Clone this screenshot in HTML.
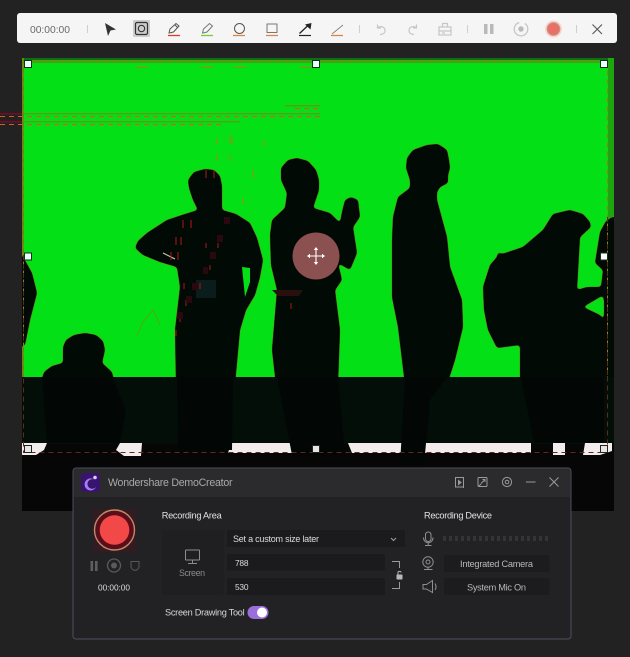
<!DOCTYPE html>
<html><head><meta charset="utf-8"><style>
html,body{margin:0;padding:0;background:#222223;width:630px;height:657px;overflow:hidden}
svg{display:block}
text{font-family:"Liberation Sans",sans-serif}
</style></head><body>
<svg width="630" height="657" viewBox="0 0 630 657" xmlns="http://www.w3.org/2000/svg">
<defs>
<filter id="sm" x="-5%" y="-5%" width="110%" height="110%" color-interpolation-filters="sRGB">
<feGaussianBlur in="SourceAlpha" stdDeviation="1.6" result="b"/>
<feComponentTransfer in="b" result="t"><feFuncA type="linear" slope="7" intercept="-3"/></feComponentTransfer>
<feMorphology in="t" operator="dilate" radius=".7" result="d"/>
<feFlood flood-color="#5f9a12" result="c"/>
<feComposite in="c" in2="d" operator="in" result="e"/>
<feFlood flood-color="#020a05" result="k"/>
<feComposite in="k" in2="t" operator="in" result="f"/>
<feMerge><feMergeNode in="e"/><feMergeNode in="f"/></feMerge>
</filter>
<clipPath id="up"><rect x="22" y="58" width="592" height="319"/></clipPath>
<clipPath id="dn"><rect x="0" y="377" width="630" height="280"/></clipPath>
</defs>
<rect width="630" height="657" fill="#222223"/>
<!-- image -->
<rect x="22" y="58" width="592" height="453" fill="#060606"/>
<rect x="22" y="58" width="592" height="319" fill="#04e016"/>
<rect x="22" y="58" width="592" height="2" fill="#0d6e12"/>
<rect x="22" y="60" width="592" height="3" fill="#3aa812"/>
<rect x="608" y="58" width="6" height="319" fill="#1ea50f"/>
<rect x="22" y="58" width="2" height="319" fill="#5f8a14"/>
<!-- silhouettes -->
<g clip-path="url(#up)"><g filter="url(#sm)" fill="#000">
<path d="M15 255H22L32 273 37 293 30 320 25 345 15 350Z"/>
<path d="M63 347L66 340 74 335 85 333 96 335 103 341 105 350 102 363 112 372 115 385H40L44 372 52 366 63 363Z"/>
<path d="M205 169L214 170 220 176 222 186 222 204 222 210 236 214 250 223 257 238 263 260 260 277 255 295 246 310 240 330 235 385H176L175 330 180 287 177 267 160 262 143 255 135 248 138 241 147 233 167 220 182 215 198 210 193 200 189 188 188 180 194 172Z"/>
<path d="M297 158L308 161 316 170 319 180 319 190 313 208 330 213 340 223 342 212 345 200 351 197 358 200 360 217 353 227 357 253 350 270 338 263 342 280 335 290 340 330 338 385H276L272 350 277 290 271 265 270 235 272 220 285 208 287 193 281 180 281 168 288 160Z"/>
<path d="M427 145L438 144 447 150 449 160 450 168 448 175 448 183 440 187 437 192 437 200 447 237 450 267 462 300 463 327 455 360 447 385H405L398 327 392 297 392 240 393 217 398 197 410 188 410 180 406 168 407 158 413 150Z"/>
<path d="M570 210L583 214 590 222 591 227 580 237 577 290 587 287 603 287 604 295 600 297 583 307 600 315 604 320 604 385H520V345L497 348 488 330 484 310 483 287 490 265 497 257 498 252 502 254 523 247 543 230 553 214Z"/>
<path d="M620 217L612 217 606 221 600 232 595 263 603 270 601 287 604 300 604 385H620Z"/>
</g></g>
<path d="M242 267L250 268 250 282 245 297Z" fill="#04e016"/>
<path d="M163 253L175 259" stroke="#c8d8c0" stroke-width="1"/>
<rect x="22" y="377" width="592" height="67" fill="#030e08"/>
<rect x="22" y="444" width="592" height="67" fill="#060606"/>
<!-- white strips -->
<g fill="#f3ecec">
<path d="M22 443H47L44 450 36 455H22Z"/>
<path d="M120 443H142L141 456H124L116 450Z"/>
<path d="M231 443H290L292 453H228Z"/>
<path d="M303 443H320V455H303Z"/>
<path d="M348 443H402V453H352Z"/>
<path d="M423 443H531V453H423Z"/>
<path d="M553 443H565V455H553Z"/>
<path d="M585 443H612V451L600 455H583Z"/>
</g>
<!-- lower bodies -->
<g fill="#020705">
<path d="M42 377H112L126 410 120 443H47Z"/>
<path d="M177 377H233L232 450 178 450Z"/>
<path d="M277 377H338L345 455H292Z"/>
<path d="M405 377H447L430 400 424 465H400Z"/>
<path d="M521 377H604V443H534Z"/>
</g>
<g fill="#0a1c1c"><rect x="196" y="280" width="20" height="18"/></g>
<!-- artifacts -->
<g>
<rect x="0" y="113" width="22" height="1.500" fill="#7a0a22"/>
<rect x="0" y="121" width="22" height="1.500" fill="#7a0a22"/>
<rect x="24" y="113" width="296" height="1.500" fill="#5aa015"/>
<rect x="24" y="121" width="216" height="1.500" fill="#5aa015"/>
<rect x="285" y="105" width="35" height="1.500" fill="#5aa015"/>
<line x1="0" y1="116.500" x2="320" y2="116.500" stroke="#d0602a" stroke-width="1" stroke-dasharray="5 4"/>
<line x1="0" y1="124.500" x2="225" y2="124.500" stroke="#d0602a" stroke-width="1" stroke-dasharray="5 4"/>
<line x1="295" y1="108.500" x2="320" y2="108.500" stroke="#d0602a" stroke-width="1" stroke-dasharray="5 4"/>
<path d="M136 67.500h12M201 67.500h12M234 67.500h12M300 67.500h12" stroke="#b0801a" stroke-width="1"/>
<path d="M230 135v8M217 138v6M232 138v6M217 155v6M230 155v6M264 140v6M253 170v8M243 198v6" stroke="#a08a18" stroke-width="1"/>
<path d="M206 170v8M214 170v8M183 220v8M191 220v8M176 237v8M181 237v8M171 252v8M178 252v8M206 243v5M218 243v5M210 265v5M184 283v6M200 283v6M186 300v6M180 316v6M176 330v6M291 303v6" stroke="#b01818" stroke-width="1"/>
<g fill="#2a0810"><rect x="224" y="217" width="6" height="7"/><rect x="217" y="235" width="6" height="7"/><rect x="210" y="252" width="6" height="7"/><rect x="203" y="267" width="5" height="7"/><rect x="192" y="283" width="6" height="7"/><rect x="186" y="296" width="6" height="7"/><rect x="177" y="312" width="6" height="7"/></g>
<path d="M272 290H303L299 296H278Z" fill="#2a100c"/>
<path d="M137 335L143 322 153 310 160 325" fill="none" stroke="#5aa015" stroke-width=".8"/>
</g>
<!-- dashed selection -->
<g fill="none" stroke-width="1" stroke-dasharray="5 4">
<rect x="23.500" y="60.500" width="584" height="392" stroke="#8d8216" clip-path="url(#up)"/>
<rect x="23.500" y="60.500" width="584" height="392" stroke="#5e2a1a" clip-path="url(#dn)"/>
<path d="M607.500 217V377M23.500 255V345" stroke="#5e2a1a"/>
</g>
<!-- handles -->
<g fill="#e6ffff" stroke="#123018" stroke-width="1">
<rect x="24.500" y="60.500" width="7" height="7"/>
<rect x="312.500" y="60.500" width="7" height="7"/>
<rect x="600.500" y="60.500" width="7" height="7"/>
<rect x="24.500" y="253" width="7" height="7"/>
<rect x="600.500" y="253" width="7" height="7" fill="#fff"/>
</g>
<g fill="#e8e4e4" stroke="#222" stroke-width="1">
<rect x="24.500" y="445.500" width="7" height="7"/>
<rect x="312.500" y="445.500" width="7" height="7"/>
<rect x="600.500" y="445.500" width="7" height="7"/>
</g>
<!-- move button -->
<circle cx="316" cy="256" r="23.500" fill="#8b5050"/>
<g stroke="#fff" stroke-width="1.100" fill="#fff">
<path d="M316 248V264M308 256H324" fill="none"/>
<path d="M316 247l-2.200 3h4.400ZM316 265l-2.200-3h4.400ZM307 256l3-2.200v4.400ZM325 256l-3-2.200v4.400Z" stroke="none"/>
</g>
<!-- toolbar -->
<rect x="17" y="13" width="600" height="30" rx="3" fill="#f5f5f5"/>
<text x="30" y="33" font-size="10.300" fill="#6a6a6a" textLength="40">00:00:00</text>
<g stroke="#cfcfcf" stroke-width="1"><path d="M87.500 25v8M359.500 25v8M467.500 25v8M576.500 25v8"/></g>
<path d="M105 23L116 29.500 110.500 30.500 108 36Z" fill="#333"/>
<rect x="133" y="20" width="17" height="17" rx="1" fill="#cdcdcd"/>
<rect x="135.500" y="22.500" width="12" height="12" rx="1.500" fill="none" stroke="#333" stroke-width="1.200"/>
<circle cx="141.500" cy="28.500" r="3.200" fill="none" stroke="#333" stroke-width="1.100"/>
<g fill="none" stroke="#555" stroke-width="1">
<path d="M169 33L170 29 176 23.500 179 26 173.500 32 169.500 33ZM175 25L177.500 27.500"/>
<path d="M202.500 33L203.500 29 209.500 23.500 212.500 26 207 32 203 33Z" stroke="#777"/>
<circle cx="239.500" cy="28.500" r="5"/>
<rect x="267" y="24" width="10" height="8.500" stroke="#777"/>
<path d="M332 34L343 25" stroke="#888"/>
</g>
<path d="M168 35.500H180" stroke="#e03a20" stroke-width="1.300"/>
<path d="M201 35.500H213" stroke="#6fd030" stroke-width="1.300"/>
<path d="M233 35.500H245M266 35.500H278M331 35.500H343" stroke="#e08040" stroke-width="1.300"/>
<path d="M299 35.500H311" stroke="#222" stroke-width="1.200"/>
<path d="M299.500 33.500L308 25.500" stroke="#222" stroke-width="1.300"/>
<path d="M311.500 23L310.500 29.500 305 24.500Z" fill="#222"/>
<g fill="none" stroke="#c6c6c6" stroke-width="1.200">
<path d="M377.500 24.500V28H381M377.500 28C380 25.500 385 26.500 385 30.500 385 33 383 34.500 380 34.500"/>
<path d="M416.500 24.500V28H413M416.500 28C414 25.500 409 26.500 409 30.500 409 33 411 34.500 414 34.500"/>
<rect x="439" y="27" width="12" height="8"/>
<path d="M442.500 27V23.500H447.500V27M439 31H451M442 33H445"/>
<circle cx="521" cy="29" r="6.800" stroke-dasharray="30 6" stroke-width="1.300"/>
</g>
<g fill="#b9b9b9"><rect x="484" y="24" width="3.500" height="10"/><rect x="490" y="24" width="3.500" height="10"/><circle cx="521" cy="29" r="2.700"/></g>
<circle cx="553.500" cy="29" r="8.500" fill="#fbd3d3"/>
<circle cx="553.500" cy="29" r="6.300" fill="#ea6f68" stroke="#c39a80" stroke-width="1.100"/>
<path d="M592.500 24.500L602 34M602 24.500L592.500 34" stroke="#555" stroke-width="1.100"/>
<!-- panel -->
<rect x="73" y="468" width="498" height="171" rx="3" fill="#222224" stroke="#4e4e62" stroke-width="1"/>
<path d="M74 497V471a2 2 0 0 1 2-2H568a2 2 0 0 1 2 2V497Z" fill="#2b2b2d"/>
<rect x="81" y="473" width="19" height="19" rx="3" fill="#37156f"/>
<path d="M94 479.500A6 6 0 1 0 96 487 4.800 4.800 0 1 1 94 479.500Z" fill="#a67cf0"/>
<circle cx="95" cy="477.500" r="1.800" fill="#e0c8ff"/>
<text x="108" y="486" font-size="10.600" fill="#a9a9a9" textLength="124.500">Wondershare DemoCreator</text>
<g fill="none" stroke="#9a9a9a" stroke-width="1">
<path d="M463.500 477.500H455.500V487H463.500M463.500 477V488"/>
<path d="M458.500 480.500L461 482.500 458.500 484.500Z" fill="#9a9a9a"/>
<rect x="478" y="477.500" width="9" height="9" rx="1"/>
<path d="M481 483.500L485 479.500M485 482V479.500H482.500M478.500 486.500L481 484"/>
<circle cx="507" cy="482" r="4.600"/><circle cx="507" cy="482" r="1.800"/>
<path d="M526 482H535.500M549.500 477.500L558.500 486.500M558.500 477.500L549.500 486.500"/>
</g>
<!-- record -->
<rect x="93" y="509" width="43" height="43" fill="#4f0f1c" opacity=".35"/>
<circle cx="114.500" cy="530" r="20" fill="#5a0e1a" stroke="#bf8a68" stroke-width="1.400"/>
<circle cx="114.500" cy="530" r="14.800" fill="#f24848"/>
<rect x="90.500" y="561" width="2.600" height="10" fill="#5e5e5e"/><rect x="95" y="561" width="2.600" height="10" fill="#5e5e5e"/>
<circle cx="114" cy="565.500" r="6.500" fill="none" stroke="#5a5a5a" stroke-width="1.300"/><circle cx="114" cy="565.500" r="3" fill="#5a5a5a"/>
<path d="M131 561.500H139V566.500C139 568.500 137 570 135 570.500 133 570 131 568.500 131 566.500Z" fill="none" stroke="#555" stroke-width="1.100"/>
<text x="98" y="590.500" font-size="8.300" fill="#dcdcdc" textLength="32">00:00:00</text>
<!-- recording area -->
<text x="161.700" y="518.500" font-size="9.200" fill="#e2e2e2" textLength="60">Recording Area</text>
<rect x="162" y="530" width="62" height="65" rx="2" fill="#1f1f21"/>
<g fill="none" stroke="#8c8c8c" stroke-width="1"><rect x="185.500" y="550" width="14" height="10" rx=".5"/><path d="M192.500 560V563.500M188 563.500H197"/></g>
<text x="179" y="576" font-size="8.800" fill="#8a8a8a" textLength="26">Screen</text>
<rect x="227" y="530" width="178" height="17" rx="2" fill="#1b1b1d"/>
<text x="233" y="542" font-size="9" fill="#dcdcdc" textLength="86">Set a custom size later</text>
<path d="M391 538L393.500 540.500 396 538" fill="none" stroke="#a0a0a0" stroke-width="1"/>
<rect x="227" y="554" width="158" height="16.500" rx="2" fill="#1b1b1d"/>
<rect x="227" y="578" width="158" height="17" rx="2" fill="#1b1b1d"/>
<text x="235" y="566" font-size="8.400" fill="#dcdcdc" textLength="13.500">788</text>
<text x="235" y="590" font-size="8.400" fill="#dcdcdc" textLength="13.500">530</text>
<path d="M392 561.500H399.500V568M392 588.500H399.500V582" fill="none" stroke="#9a9a9a" stroke-width="1"/>
<rect x="396.500" y="574.500" width="6" height="5" rx=".7" fill="#b8b8b8"/>
<path d="M398 574.500V572.500C398 571 401 571 401 572.500" fill="none" stroke="#b8b8b8" stroke-width="1"/>
<text x="165" y="615.500" font-size="9.200" fill="#d8d8d8" textLength="79.700">Screen Drawing Tool</text>
<rect x="247.500" y="606" width="21" height="13" rx="6.500" fill="#9a6fdc"/>
<circle cx="262" cy="612.500" r="5" fill="#fff"/>
<!-- device -->
<text x="424" y="518.500" font-size="9.200" fill="#e2e2e2" textLength="68">Recording Device</text>
<g fill="none" stroke="#8f8f8f" stroke-width="1">
<rect x="425.500" y="532" width="5.500" height="9.500" rx="2.700"/>
<path d="M423.500 537.500C423.500 544.500 433 544.500 433 537.500M428.200 542.500V545M425 545.500H431.500"/>
<circle cx="428" cy="562" r="5.200"/><circle cx="428" cy="562" r="2"/>
<path d="M424 569.500H432.500M428 567V569.500"/>
<path d="M423 584.500H426.500L432.500 580.500V592.500L426.500 589H423ZM435 583.500C436.300 585.500 436.300 588 435 590"/>
</g>
<g fill="#343436">
<rect x="443" y="536" width="3" height="5"/><rect x="449" y="536" width="3" height="5"/><rect x="455" y="536" width="3" height="5"/><rect x="461" y="536" width="3" height="5"/><rect x="467" y="536" width="3" height="5"/><rect x="473" y="536" width="3" height="5"/><rect x="479" y="536" width="3" height="5"/><rect x="485" y="536" width="3" height="5"/><rect x="491" y="536" width="3" height="5"/><rect x="497" y="536" width="3" height="5"/><rect x="503" y="536" width="3" height="5"/><rect x="509" y="536" width="3" height="5"/><rect x="515" y="536" width="3" height="5"/><rect x="521" y="536" width="3" height="5"/><rect x="527" y="536" width="3" height="5"/><rect x="533" y="536" width="3" height="5"/><rect x="539" y="536" width="3" height="5"/><rect x="545" y="536" width="3" height="5"/>
</g>
<rect x="444" y="555" width="105.500" height="17" rx="2" fill="#1c1c1e"/>
<rect x="444" y="578" width="105.500" height="17" rx="2" fill="#1c1c1e"/>
<text x="460" y="567" font-size="9.200" fill="#b8b8b8" textLength="73">Integrated Camera</text>
<text x="467" y="590.500" font-size="9.200" fill="#b8b8b8" textLength="59">System Mic On</text>
</svg>
</body></html>
